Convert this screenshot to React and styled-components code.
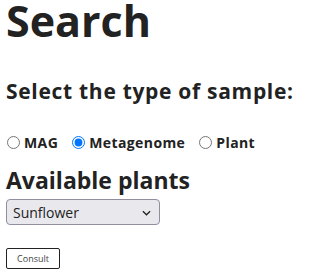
import React from "react";
import styled, { createGlobalStyle } from "styled-components";

const GlobalStyle = createGlobalStyle`
  body {
    margin: 0;
    background: #fff;
    color: #222;
    font-family: "Open Sans", "Noto Sans", sans-serif;
  }
`;

function App() {
  return (
    <>
      <GlobalStyle />
      <Page>
        <Title>Search</Title>
        <Subtitle>Select the type of sample:</Subtitle>

        {/* sample type */}
        <RadioRow>
          <RadioLabel>
            <input type="radio" name="sample" value="mag" />
            MAG
          </RadioLabel>
          <RadioLabel>
            <input type="radio" name="sample" value="metagenome" defaultChecked />
            Metagenome
          </RadioLabel>
          <RadioLabel>
            <input type="radio" name="sample" value="plant" />
            Plant
          </RadioLabel>
        </RadioRow>

        {/* plants */}
        <Heading>Available plants</Heading>
        <SelectWrap>
          <Select defaultValue="sunflower">
            <option value="sunflower">Sunflower</option>
          </Select>
          <Chevron viewBox="0 0 10 6">
            <path d="M1 1l4 4 4-4" fill="none" stroke="#222" strokeWidth="1.4" />
          </Chevron>
        </SelectWrap>

        <ConsultButton>Consult</ConsultButton>
      </Page>
    </>
  );
}

export default App;

const Page = styled.div`
  display: flex;
  flex-direction: column;
  align-items: flex-start;
  padding: 0 6px;
`;

const Title = styled.h1`
  margin: 0;
  font-size: 43px;
  line-height: 42px;
  font-weight: 700;
  white-space: nowrap;
`;

const Subtitle = styled.h2`
  margin: 35px 0 0;
  font-size: 21px;
  line-height: 28px;
  font-weight: 700;
  letter-spacing: 0.7px;
  white-space: nowrap;
`;

const RadioRow = styled.div`
  display: flex;
  align-items: center;
  gap: 13px;
  height: 19px;
  margin-top: 28px;
`;

const RadioLabel = styled.label`
  display: flex;
  align-items: center;
  gap: 4px;
  font-size: 14px;
  line-height: 19px;
  font-weight: 700;
  letter-spacing: 0.4px;

  > input {
    margin: 0 0 0 1px;
    width: 13px;
    height: 13px;
  }
`;

const Heading = styled.h2`
  margin: 13px 0 0;
  font-size: 23px;
  line-height: 30px;
  font-weight: 700;
`;

const SelectWrap = styled.div`
  position: relative;
  margin-top: 4px;
`;

const Select = styled.select`
  appearance: none;
  width: 154px;
  height: 26px;
  padding: 0 6px;
  background: #e9e9ed;
  border: 1px solid #8f8f9d;
  border-radius: 4px;
  color: #222;
  font-family: "Open Sans", sans-serif;
  font-size: 14px;
`;

const Chevron = styled.svg`
  position: absolute;
  right: 9px;
  top: 11px;
  width: 9px;
  height: 6px;
  pointer-events: none;
`;

const ConsultButton = styled.button`
  margin-top: 23px;
  width: 54px;
  height: 21px;
  padding: 0;
  background: #fff;
  border: 1px solid #222;
  border-radius: 2px;
  color: #444;
  font-family: "Open Sans", sans-serif;
  font-size: 9px;
`;
